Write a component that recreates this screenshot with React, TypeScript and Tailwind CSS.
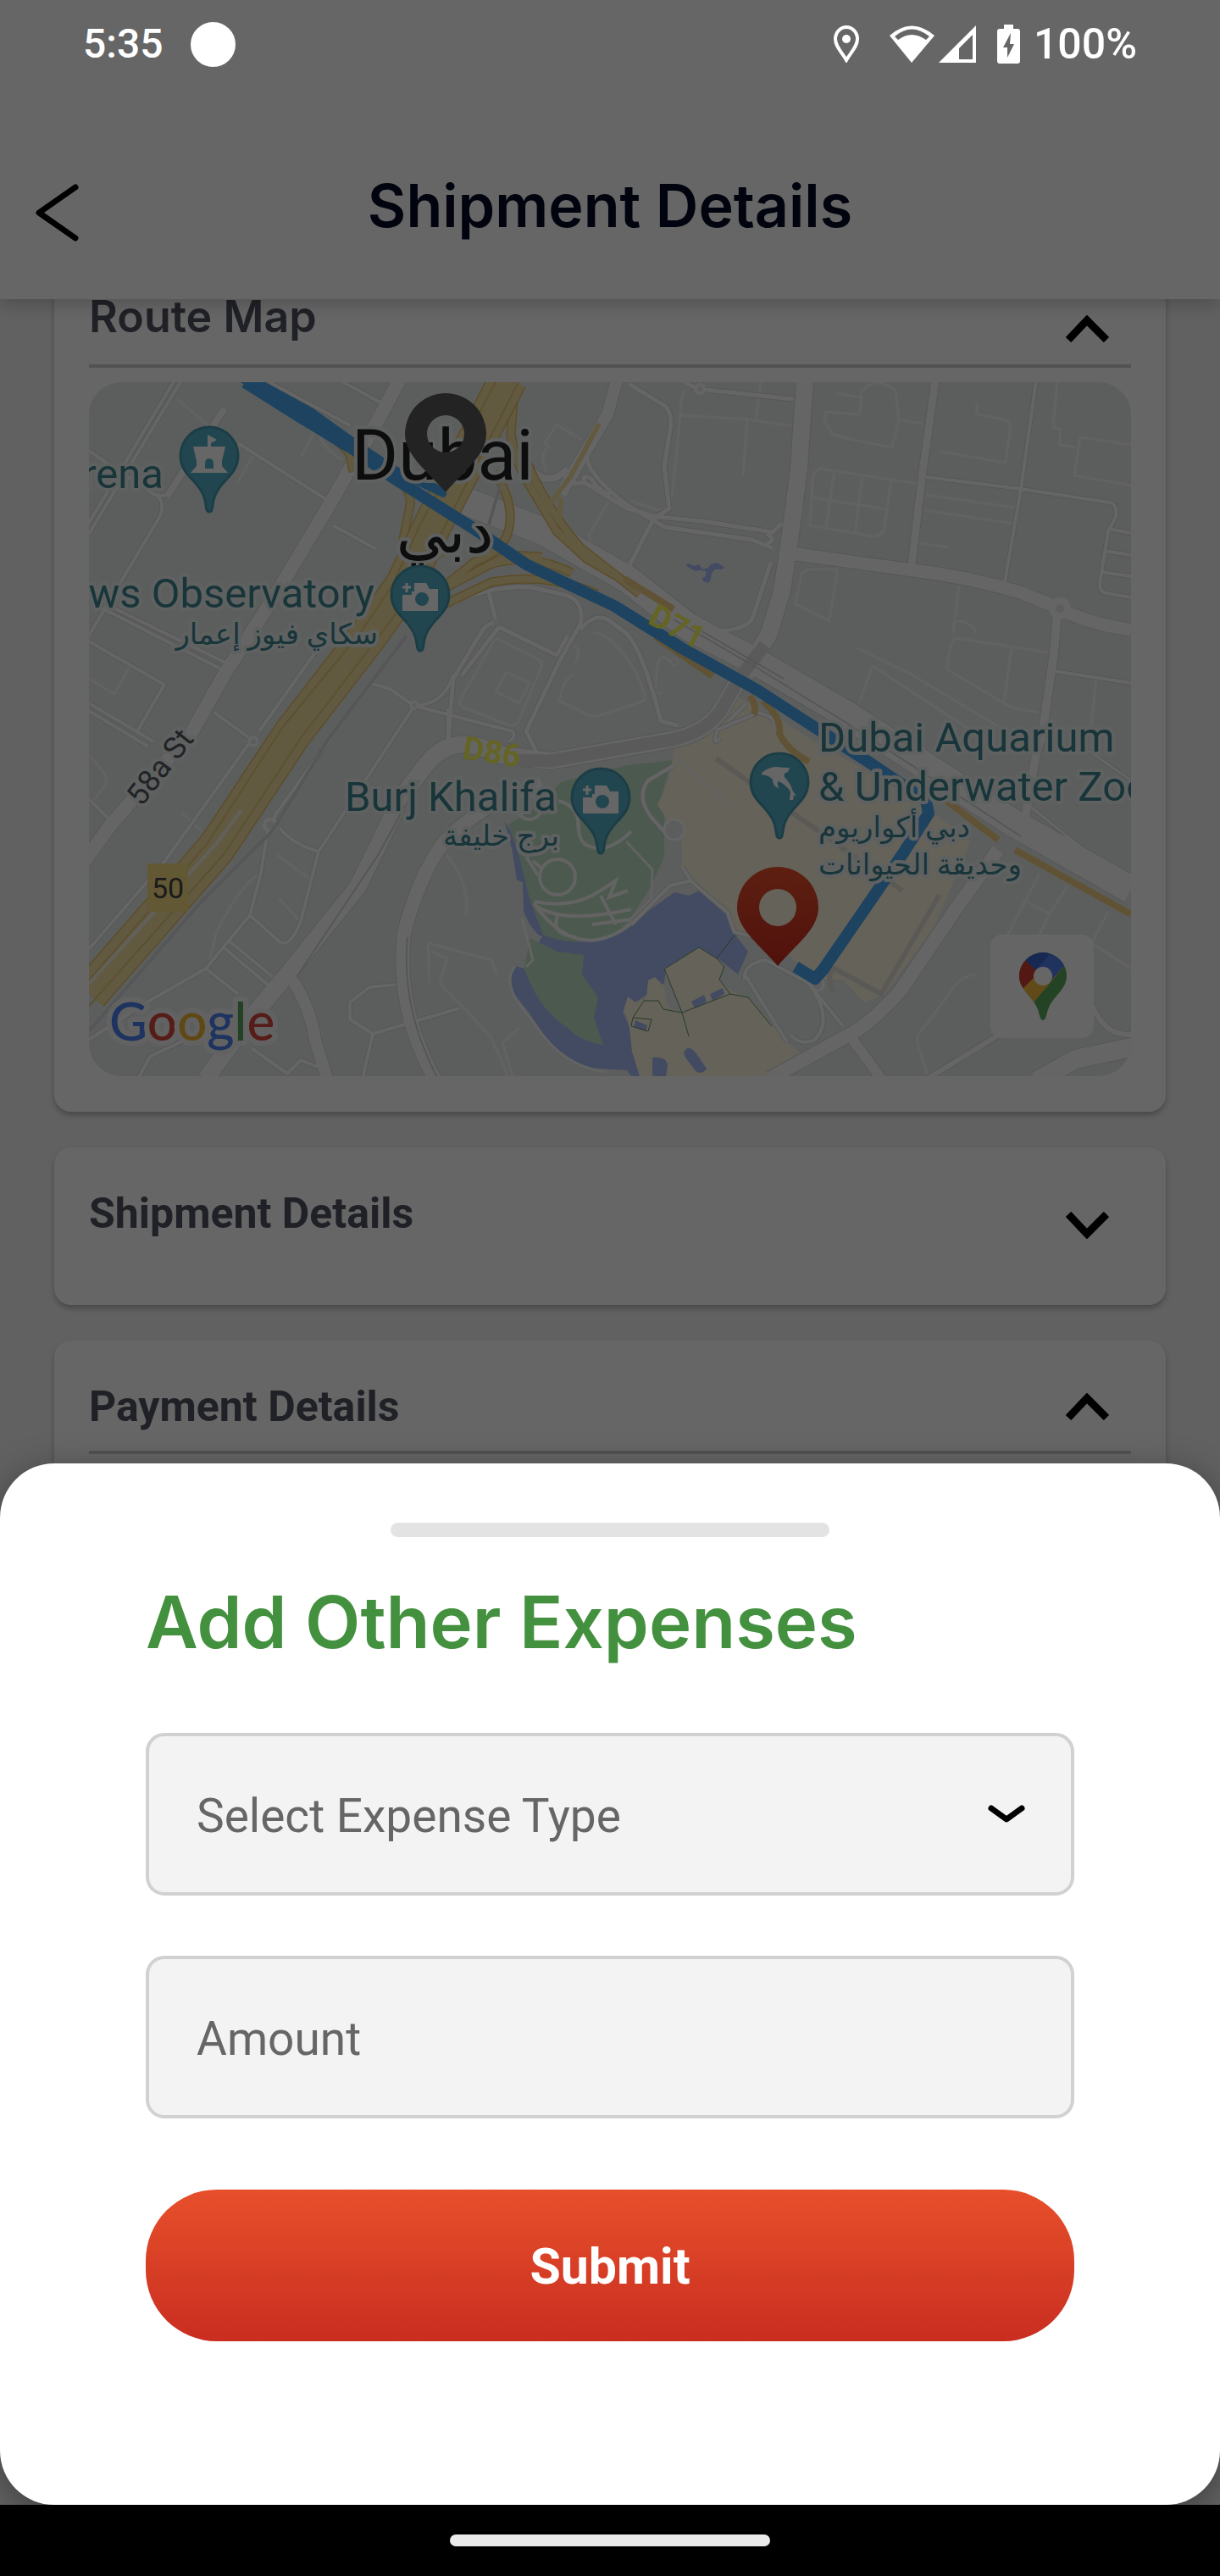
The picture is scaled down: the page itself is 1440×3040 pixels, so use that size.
import { useState } from "react";
import type { ReactNode } from "react";

type Road = { d: string; w: number };

const parks = [
  "M635 452 L557 472 L536 496 L495 522 L508 560 L520 609 L536 652 Q565 664 594 659 L625 649 Q660 610 679 559 L679 509 Q672 480 691 446 Z",
  "M520 656 L553 672 L584 676 L582 699 L601 726 L596 750 L607 782 Q580 778 565 762 Q530 740 514 692 Z",
];

const water = [
  "M503 689 Q496 700 499 719 L520 745 L536 769 Q560 804 599 810 L635 812 L640 819 L650 819 L644 776 L630 742 L679 709 L681 692 L720 667 L741 679 L766 699 L778 672 L765 655 L754 626 L722 599 L708 606 L691 602 L625 649 L594 659 L536 652 L514 692 Z",
  "M491 519 L500 555 L505 588 L512 590 L513 625 Q524 650 534 654 L566 640 L530 610 L527 590 L518 560 Z",
  "M704 216 l4 -2 6 3 6 -2 4 6 7 -2 3 -4 7 -2 9 5 -2 3 -9 0 -4 4 -1 8 -3 4 -6 -2 -1 -4 4 -2 0 -6 -8 -1 -4 1 -6 -3 z",
];

const sands = [
  "M700 419 L766 372 L812 395 L857 425 L977 492 L1040 542 L998 642 L940 722 L915 732 L890 705 L857 704 L803 656 L762 649 L754 622 L724 596 L700 572 L700 542 L671 499 L684 470 L690 436 Z",
  "M679 692 L720 667 L749 686 L744 705 L758 719 L778 726 L824 779 L841 792 L803 819 L650 819 L641 790 L637 752 L631 742 L636 725 L645 732 L658 728 L660 706 L668 702 L678 712 L684 738 L700 744 Z",
];

const ponds = [
  "M711 731 l15 -8 3 8 -14 8 z",
  "M733 722 l15 -7 2 7 -14 8 z",
  "M645 753 l14 6 -2 7 -14 -5 z",
  "M706 786 Q700 790 704 797 L716 813 Q724 818 729 810 L716 791 Q711 785 706 786 Z",
  "M665 797 Q683 795 683 808 L681 819 L665 819 Z",
];

const minorRoads = [
  "M979 120 L863 102 Q855 104 854 118 L851 169 L925 182 Q936 182 939 172 L947 115",
  "M880 104 L870 172 M913 109 L904 179 M853 136 L942 150",
  "M988 133 L1093 148 M986 151 L1091 167 M979 190 L1015 195",
  "M698 39 L778 44 L832 52 M777 44 L772 110 M793 0 L787 46 M703 9 Q698 20 698 39 L689 126 Q686 152 672 151 L640 140",
  "M1133 319 L1023 302 Q1016 304 1013 339 L1089 384 L1122 390 M1089 312 L1080 377",
  "M905 313 L969 344 L1073 406 M1027 239 L1020 296 M1024 282 Q1040 282 1048 296",
  "M884 216 L874 282 L834 262 L841 226 Q845 218 884 222",
  "M911 70 L878 62 L868 45 L870 35 L910 38 L912 10 Q930 -8 952 10 L956 45 L948 77 L911 70 Z M954 44 L984 49 M882 13 L912 18",
  "M1048 25 L1048 38 L1083 45 L1088 50 L1082 95 L1005 82",
  "M1143 0 L1138 53 L1146 56 L1146 74 L1165 77 M1230 74 L1170 65 L1163 110 L1230 122",
  "M480 302 L532 328 Q536 331 534 336 L508 398 Q505 406 496 405 L441 383 Q436 381 438 375 Z M493 342 L520 355 L508 379 L480 365 Z",
  "M595 296 Q602 294 615 304 Q645 330 656 370 Q658 376 650 378 L600 394 L592 394 L555 376 Q560 350 572 345 M571 310 Q582 315 574 332",
  "M400 662 L475 682 L482 700 M400 662 L402 709 M414 709 L423 680 L404 672 M414 709 L474 772 L495 819 M500 819 L488 780 L508 762",
  "M420 556 Q450 590 445 629 M222 558 L262 587 M224 609 L250 637 M203 580 Q180 590 150 650 L139 696",
  "M977 776 L990 819 M977 776 Q980 765 990 756 L1020 715 Q1030 700 1048 699",
  "M1122 580 L1078 664 M1102 611 L1134 627 L1118 660 M1203 625 L1178 672 M1186 664 L1230 692 M1155 594 L1134 627",
  "M0 350 L30 368 L49 334 M250 88 L270 52 Q272 77 300 92 M104 20 L145 54 M175 120 L196 82",
  "M0 440 Q25 465 20 475 L0 500 M110 508 L133 530 M690 440 L758 500 M634 542 L665 575 L664 610 L640 633",
  "M552 50 L538 72 L545 78 M552 50 L582 68 M540 105 Q532 90 540 78 M614 140 L590 180 L594 195 L622 218",
  "M688 330 Q672 318 671 335 L668 368 L676 366 M909 378 L925 335 L1055 420 M1183 406 L1189 351",
];

const roads: Road[] = [
  { d: "M366 -2 L345 38 L283 146 L217 256 L159 346 L122 412 L26 522 L-10 572", w: 16 },
  { d: "M109 -2 L0 179 M101 -2 L0 166", w: 4 },
  { d: "M160 31 L92 135", w: 8 },
  { d: "M0 81 L76 132 Q94 138 98 126 M80 134 Q90 142 84 158 L0 299", w: 4 },
  { d: "M176 72 L281 139 L283 146 M288 169 L339 197 M213 0 L308 51 M300 0 L344 24", w: 4 },
  { d: "M20 262 L163 332 L160 346 M14 266 L155 338", w: 4 },
  { d: "M0 306 L89 357 L57 412 M0 379 L76 424 M0 388 L70 430", w: 4 },
  { d: "M147 389 L188 419 M267 319 L201 412", w: 4 },
  { d: "M623 -2 L612 38 L586 82 L557 132", w: 14 },
  { d: "M518 98 Q541 128 565 102", w: 8 },
  { d: "M561 125 L570 119 L586 119 L635 149 L671 159 L724 164 L807 177 L818 166 M586 119 Q580 108 592 113 Q600 126 615 134", w: 5 },
  { d: "M625 139 L679 171 L783 186 L807 196 M800 178 Q812 188 800 190", w: 5 },
  { d: "M637 2 L680 28 Q687 34 687 50 L679 99 L685 149 L666 162 L633 226 L640 238 L740 294 Q780 292 784 276 L805 212 M588 90 Q590 110 635 145", w: 5 },
  { d: "M700 -2 L718 8 M727 9 L832 20", w: 5 },
  { d: "M433 136 L536 176 L635 232 L708 289 L791 332 L894 392 L977 446 L1089 519 L1230 599", w: 32 },
  { d: "M845 -2 L838 102 L828 179 L818 246 L803 296 L775 345", w: 20 },
  { d: "M828 202 L973 222 Q1040 230 1102 249 L1143 266 Q1180 286 1230 292", w: 15 },
  { d: "M999 -2 L984 106 L971 216", w: 9 },
  { d: "M1118 -2 L1100 126 L1081 236", w: 4 },
  { d: "M988 112 L1100 126 L1205 142 Q1214 144 1212 159 L1203 176 L1193 238 Q1193 248 1201 249 L1230 254 M1203 173 L1230 178 M1198 199 L1230 204 M1195 224 L1230 229", w: 4 },
  { d: "M1143 270 L1139 320 L1125 416 L1118 439 L1104 519", w: 10 },
  { d: "M1139 341 L1230 355", w: 4 },
  { d: "M1230 470 L1180 435 M1110 500 L1185 560", w: 3 },
  { d: "M770 346 L745 389 Q725 415 687 422 L545 447 L482 439 Q430 412 400 449 Q375 480 366 496 L317 596 L234 699 L184 759 L138 822", w: 20 },
  { d: "M430 262 Q470 240 522 242 L565 252 Q585 260 580 286 L557 326 L516 412 L530 440", w: 5 },
  { d: "M472 248 L480 280 M484 289 L552 322 L565 300 M478 284 Q468 285 460 300 L430 350 L424 420 M484 289 L440 346", w: 5 },
  { d: "M580 292 Q598 270 615 282 L635 297 Q655 320 675 400 L695 405", w: 5 },
  { d: "M335 356 L355 362 L384 382 L500 412 Q505 420 495 424 M384 382 Q420 380 430 345 M424 385 L424 425", w: 4 },
  { d: "M284 422 L221 509 L211 529 L203 579 L190 629 L138 692 L68 732 L0 776", w: 4 },
  { d: "M225 526 Q240 545 271 554 L384 382 M271 554 L250 636 Q236 672 222 658 L190 629", w: 4 },
  { d: "M165 659 L217 702 M160 668 L212 712 M138 692 L176 722", w: 4 },
  { d: "M192 422 L89 566 L0 669 M0 492 L28 520", w: 4 },
  { d: "M534 472 L480 496 Q440 520 420 542 Q390 580 372 650 Q362 740 408 822", w: 16 },
  { d: "M240 705 Q262 740 267 776 L281 822", w: 14 },
  { d: "M362 711 L331 714 L308 732 L308 752 L335 769 L323 822 M335 769 L437 739", w: 4 },
  { d: "M192 786 L234 816 L250 800 L270 808 M143 762 L72 796 L58 822", w: 4 },
  { d: "M1073 552 L1023 622 L957 719 Q920 760 894 772 L803 822", w: 16 },
  { d: "M897 770 L935 822", w: 12 },
  { d: "M1235 784 L1164 799 L1118 825", w: 22 },
  { d: "M990 822 L1081 766 M1180 725 Q1195 772 1230 770", w: 6 },
  { d: "M774 699 L824 779 M774 705 Q772 686 799 682 L849 709 Q880 750 857 776 Q840 784 828 770 M849 709 L890 760", w: 4 },
  { d: "M691 452 L660 470 Q645 490 665 515 L684 536 M700 572 L712 590 L754 626 L762 649 L790 656 M712 588 L686 594 L640 640", w: 4 },
  { d: "M745 420 Q735 432 742 410 L790 390 Q812 395 808 405 M755 400 L775 380", w: 4 },
];

const motorwayRamps = [
  "M502 10 L498 62 Q505 100 522 125 L552 176 L588 209 L628 232",
  "M515 90 Q540 150 580 195 L650 250",
  "M478 106 Q502 140 496 172 Q490 200 455 212 L418 242",
  "M535 206 L495 204 L428 239 L348 290",
  "M600 250 Q540 224 475 236 L420 262",
  "M570 225 Q520 200 470 216",
  "M250 42 Q300 70 308 86 L312 106",
  "M355 110 Q385 124 378 150 L370 190 L376 215",
  "M425 140 Q405 176 418 206",
];

const thinRamps = [
  "M602 49 L568 112 L542 146",
  "M557 136 L555 168",
];

const motorway = "M495 -4 L462 60 L405 170 L372 240 L329 300 L240 415 L151 549 L0 722";

function Roads() {
  return (
    <g fill="none" strokeLinejoin="round" strokeLinecap="butt">
      {minorRoads.map((d) => (
        <path key={d} d={d} stroke="#f2f4f3" strokeWidth={3} />
      ))}
      {roads.map((road) => (
        <path key={road.d} d={road.d} stroke="#d3d7d6" strokeWidth={road.w + 2} />
      ))}
      {roads.map((road) => (
        <path key={road.d} d={road.d} stroke="#fdfdfd" strokeWidth={road.w} />
      ))}
      <path
        d="M798 310 L770 346 L745 389 Q725 415 687 422 L545 447 L505 446"
        stroke="#e1e1e1"
        strokeWidth={15}
      />
      <path
        d="M690 280 L790 338 L894 402 L1100 536 M720 292 L820 350"
        stroke="#d3d7d6"
        strokeWidth={2}
      />
      <path d="M376 655 Q368 740 412 822 M390 470 L340 560 L245 702" stroke="#d3d7d6" strokeWidth={2} />
      <circle cx="1146" cy="267" r="9" stroke="#fdfdfd" strokeWidth={8} fill="#e7ebe9" />
      <circle cx="214" cy="523" r="7" stroke="#fdfdfd" strokeWidth={4} fill="#e7ebe9" />
      <circle cx="721" cy="8" r="5" stroke="#fdfdfd" strokeWidth={4} fill="#e7ebe9" />
      <circle cx="194" cy="424" r="5" stroke="#fdfdfd" strokeWidth={3} fill="#e7ebe9" />
      <circle cx="384" cy="381" r="4" stroke="#fdfdfd" strokeWidth={3} fill="#e7ebe9" />
      <circle cx="691" cy="330" r="4" stroke="#f2f4f3" strokeWidth={2} fill="#e7ebe9" />
      <circle cx="691" cy="528" r="12" stroke="#fdfdfd" strokeWidth={3} fill="#e7ebe9" />
      <circle cx="860" cy="711" r="7" stroke="#fdfdfd" strokeWidth={3} fill="#e7ebe9" />
      {motorwayRamps.map((d) => (
        <path key={d} d={d} stroke="#e3bf68" strokeWidth={11} />
      ))}
      {motorwayRamps.map((d) => (
        <path key={d} d={d} stroke="#f3dfa0" strokeWidth={8} />
      ))}
      {thinRamps.map((d) => (
        <path key={d} d={d} stroke="#f3dfa0" strokeWidth={6} />
      ))}
      <path d={motorway} stroke="#e3bf68" strokeWidth={46} />
      <path d={motorway} stroke="#f3dfa0" strokeWidth={43} />
      <path
        d="M482 -4 L390 170 L358 240 L320 296 L228 408 L140 544 L0 706 M509 -4 L420 170 L388 240 L339 304 L250 420 L160 556 L0 736"
        stroke="#e6c878"
        strokeWidth={2}
      />
      <path d="M0 710 L150 545 L180 505" stroke="#f4f0e2" strokeWidth={4} />
      <path
        d="M486 120 L472 168 M375 299 L284 419 L217 529 L130 616 L0 766"
        stroke="#d6d8dc"
        strokeWidth={4}
      />
      <path
        d="M1000 485 L1073 540 M1093 552 L1230 628 M780 370 Q790 385 784 392 M795 376 Q818 396 815 415 Q825 435 850 448 M632 232 L690 268 M668 300 L736 347"
        stroke="#f0d084"
        strokeWidth={8}
      />
    </g>
  );
}

function Park() {
  return (
    <g fill="none" stroke="#f5f7f5" strokeWidth={4}>
      <circle cx="553" cy="584" r="21" />
      <circle cx="520" cy="502" r="14" />
      <path d="M526 613 Q570 622 604 600 L622 588 L614 608 L636 600 M527 618 Q560 640 640 622 M553 630 Q545 652 575 655 M604 606 L622 640 M594 640 L640 634" />
      <path d="M525 615 Q560 664 600 658 Q640 650 664 610 M524 565 L536 575 M516 560 L530 582" />
      <path d="M554 494 Q580 500 578 530 M640 530 Q610 560 585 545 Q575 535 578 510" />
      <path d="M503 689 Q490 705 505 730 L528 760 Q560 808 610 814 M511 632 L524 682 L516 690" strokeWidth={3} />
    </g>
  );
}

function PlacePin({ x, y, children }: { x: number; y: number; children: ReactNode }) {
  return (
    <g transform={`translate(${x} ${y})`}>
      <path
        d="M0 65 C-5 65 -3 56 -6 48 C-12 28 -34 22 -34 -1 A34 34 0 1 1 34 -1 C34 22 12 28 6 48 C3 56 5 65 0 65 Z"
        fill="#54b0c8"
        stroke="#4799ae"
        strokeWidth={3}
      />
      {children}
    </g>
  );
}

function CameraGlyph() {
  return (
    <>
      <path d="M-21 -1 H-10 V-5 H-7 V-15 H7 L11 -8 H21 V18 H-21 Z" fill="#fff" />
      <circle cx="2" cy="4" r="8" fill="#54b0c8" />
      <path d="M-16 -15 V-4 M-21 -10 H-11" stroke="#fff" strokeWidth={3} />
    </>
  );
}

function RoutePin({ x, y, fill }: { x: number; y: number; fill: string }) {
  return (
    <path
      transform={`translate(${x} ${y})`}
      d="M0 69 C-20 45 -48 26 -48 0 A48 48 0 1 1 48 0 C48 26 20 45 0 69 Z M0 22 A22 22 0 1 0 0 -22 A22 22 0 1 0 0 22 Z"
      fill={fill}
      fillRule="evenodd"
    />
  );
}

function MapsButton() {
  return (
    <g>
      <rect x="1064" y="652" width="122" height="122" rx="14" fill="#fff" fillOpacity={0.85} />
      <clipPath id="maps-pin">
        <path d="M1126 753 C1122 753 1122 744 1119 738 C1113 724 1098 716 1098 701 A28 28 0 1 1 1154 701 C1154 716 1139 724 1133 738 C1130 744 1130 753 1126 753 Z" />
      </clipPath>
      <g clipPath="url(#maps-pin)">
        <rect x="1090" y="665" width="72" height="90" fill="#5ba85c" />
        <path d="M1090 728 L1126 686 L1154 686 L1115 732 L1095 750 Z" fill="#f2b83c" />
        <path d="M1085 665 L1106 683 L1121 697 L1100 718 L1085 735 Z" fill="#cf3c31" />
        <path d="M1106 683 L1095 660 L1140 660 L1134 675 L1119 695 Z" fill="#3a68cf" />
        <path d="M1134 675 L1140 660 L1175 665 L1152 688 L1134 708 L1118 694 Z" fill="#5080ec" />
      </g>
      <circle cx="1126" cy="701" r="11" fill="#fff" />
    </g>
  );
}

function RouteMap() {
  return (
    <svg viewBox="0 0 1230 819" className="mt-[17px] block h-auto w-full rounded-[38px] bg-[#e7ebe9]">
      <defs>
        <linearGradient id="destination" x1="0" y1="0" x2="0" y2="1">
          <stop offset="0" stopColor="#ea4f2b" />
          <stop offset="1" stopColor="#c82c20" />
        </linearGradient>
      </defs>

      {water.map((d) => <path key={d} d={d} fill="#a7bbf5" />)}
      {parks.map((d) => <path key={d} d={d} fill="#bfdec4" />)}
      {sands.map((d) => <path key={d} d={d} fill="#fcf5de" />)}
      {ponds.map((d) => <path key={d} d={d} fill="#a7bbf5" />)}
      <path
        d="M741 680 L764 650 M680 692 L720 667 L741 680 L750 690 L744 705 L757 722 L700 744 L679 692 M757 722 L778 726 L806 760 M642 750 L655 730 L672 730 L678 740 L700 744 L708 772 M642 750 L640 760 L660 766 L664 752 Z"
        fill="none"
        stroke="#5c9464"
        strokeWidth={1}
      />
      <Park />
      <Roads />
      <path
        d="M740 444 L960 600 M1004 605 L935 722 L880 692 Q868 698 880 720"
        fill="none"
        stroke="#e2dfd6"
        strokeWidth={6}
      />

      <g fill="none" stroke="#4da9f0" strokeLinejoin="round">
        <path d="M164 -15 L200 0 L262 34 L318 74 L365 105 L414 126 L418 132 L350 100 L300 76 L250 44 Z" fill="#4da9f0" strokeWidth={8} />
        <path
          d="M184 0 L254 44 L308 76 L358 112 L453 172 L516 215 L620 264 L700 314 L790 364 L870 416 L923 450 L988 494 L991 509 L961 556 L866 694 L857 704 L834 690"
          strokeWidth={14}
        />
      </g>

      {/* place labels */}
      <g
        fontFamily="Roboto, sans-serif"
        fontSize="49"
        fill="#3e8491"
        stroke="#eef3f2"
        strokeWidth={8}
        strokeLinejoin="round"
        paintOrder="stroke"
      >
        <text x="88" y="125" textAnchor="end">rena</text>
        <text x="337" y="266" textAnchor="end">ws Observatory</text>
        <text x="552" y="506" textAnchor="end">Burj Khalifa</text>
        <text x="861" y="436">Dubai Aquarium</text>
        <text x="861" y="494">&amp; Underwater Zoo</text>
        <g fontFamily="'Noto Sans', 'DejaVu Sans', sans-serif" fontSize="34">
          <text x="341" y="309" textAnchor="end">سكاي فيوز إعمار</text>
          <text x="555" y="547" textAnchor="end">برج خليفة</text>
          <text x="861" y="537">دبي أكواريوم</text>
          <text x="861" y="581">وحديقة الحيوانات</text>
        </g>
        <g fill="#222">
          <text x="310" y="115" fontSize="84">Dubai</text>
          <text x="420" y="201" fontSize="74" textAnchor="middle" fontFamily="'Noto Sans', 'DejaVu Sans', sans-serif">دبي</text>
        </g>
        <text transform="translate(62 502) rotate(-52)" fontSize="36" fill="#55595f">58a St</text>
      </g>
      <g fontFamily="Roboto, sans-serif" fontSize="38" fontWeight="700" fill="#faf95a">
        <text transform="translate(658 284) rotate(28)">D71</text>
        <text transform="translate(440 444) rotate(9)">D86</text>
      </g>
      <rect x="69" y="568" width="48" height="57" fill="#f6dd83" />
      <text x="93" y="609" textAnchor="middle" fontFamily="Roboto, sans-serif" fontSize="34" fill="#444">50</text>

      <PlacePin x={142} y={88}>
        <path d="M-2 -26 L9 -20 L2 -16 V-12 H19 L15 5 V11 L22 19 H-22 L-15 11 V5 L-19 -12 H-2 Z" fill="#fff" />
        <path d="M-5 14 V8 Q-5 2 0 2 Q5 2 5 8 V14 Z" fill="#54b0c8" />
      </PlacePin>
      <PlacePin x={391} y={252}><CameraGlyph /></PlacePin>
      <PlacePin x={604} y={491}><CameraGlyph /></PlacePin>
      <PlacePin x={815} y={473}>
        <path d="M-21 -12 Q-14 -18 -5 -19 Q5 -18 12 -18 L10 -13 Q4 -12 6 -7 Q14 2 15 8 L20 16 L17 14 L16 20 L12 20 L13 10 Q6 0 -2 -2 Q-3 4 0 7 Q-8 4 -8 -4 Q-12 -9 -21 -10 Z" fill="#fff" />
      </PlacePin>

      <RoutePin x={421} y={61} fill="#595959" />
      <RoutePin x={813} y={620} fill="url(#destination)" />

      <text
        x="24"
        y="777"
        fontFamily="Lato, sans-serif"
        fontSize="62"
        fontWeight="500"
        stroke="#f4f6f5"
        strokeWidth={12}
        strokeLinejoin="round"
        paintOrder="stroke"
      >
        <tspan fill="#4c80ee">G</tspan>
        <tspan fill="#d8463a">o</tspan>
        <tspan fill="#edb432">o</tspan>
        <tspan fill="#4c80ee">g</tspan>
        <tspan fill="#57a55a">l</tspan>
        <tspan fill="#d8463a">e</tspan>
      </text>
      <MapsButton />
    </svg>
  );
}

type SectionProps = {
  title: string;
  open: boolean;
  onToggle: () => void;
  titleClass?: string;
  rowClass?: string;
  className?: string;
  children?: ReactNode;
};

function Section({ title, open, onToggle, titleClass, rowClass, className, children }: SectionProps) {
  return (
    <section className={`rounded-[20px] bg-white px-[41px] shadow-[0_4px_6px_rgba(0,0,0,0.25)] ${className || ""}`}>
      <button
        type="button"
        aria-expanded={open}
        onClick={onToggle}
        className={`flex w-full justify-between pt-12 pr-[26px] text-left ${rowClass || "items-end pb-[22px]"} ${
          open ? "border-b-4 border-[#cdcdcd]" : ""
        }`}
      >
        <span className={`leading-[60px] text-[#505361] ${titleClass || "text-[50px] font-bold"}`}>{title}</span>
        <svg viewBox="0 0 51 32" className="w-[51px]" fill="none" stroke="#000" strokeWidth={9}>
          <path d={open ? "M3 29 L25 6 L48 29" : "M3 3 L25 26 L48 3"} />
        </svg>
      </button>
      {open && children}
    </section>
  );
}

function StatusBar() {
  return (
    <div className="flex h-[104px] items-center px-[98px] text-[48px] font-medium text-white">
      <span>5:35</span>
      <span className="ml-8 size-[53px] rounded-full bg-white" />
      <svg viewBox="0 0 30 44" className="ml-auto w-[30px]" fill="none" stroke="#fff" strokeWidth={4}>
        <path d="M15 41 C10 32 2 25 2 16 A13 14 0 0 1 28 16 C28 25 20 32 15 41 Z" />
        <circle cx="15" cy="16" r="5" fill="#fff" stroke="none" />
      </svg>
      <svg viewBox="0 0 53 44" className="ml-9 w-[53px]">
        <path d="M0 12 Q26 -11 53 12 L26 44 Z" fill="#fff" />
        <path d="M6 13 Q26 -4 47 13 L43 17 Q26 5 10 17 Z" fill="#666" />
      </svg>
      <svg viewBox="0 0 44 44" className="ml-[5px] w-[44px]">
        <path d="M44 0 V44 H0 Z" fill="#fff" />
        <path d="M40 11 V40 H24 V27 Z" fill="#666" />
      </svg>
      <svg viewBox="0 0 27 46" className="ml-[25px] w-[27px]">
        <path d="M8 0 H19 V5 H24 Q27 5 27 8 V43 Q27 46 24 46 H3 Q0 46 0 43 V8 Q0 5 3 5 H8 Z" fill="#fff" />
        <path d="M16 10 L7 27 H12 V39 L20 23 H15 Z" fill="#666" />
      </svg>
      <span className="ml-4 text-[50px]">100%</span>
    </div>
  );
}

const App = () => {
  const [open, setOpen] = useState({ route: true, shipment: false, payment: true });
  const [expenseType, setExpenseType] = useState("");
  const [amount, setAmount] = useState("");

  return (
    <div className="relative flex min-h-screen flex-col overflow-hidden bg-[#f2f2f2] font-[Roboto,sans-serif]">
      <header className="relative z-10 grid grid-cols-[1fr_auto_1fr] items-center bg-white px-[42px] pt-[133px] shadow-[0_6px_20px_rgba(0,0,0,0.2)]">
        <button type="button" aria-label="Back" className="w-[51px] pt-4">
          <svg viewBox="0 0 51 68" fill="none" stroke="#000" strokeWidth={7} strokeLinecap="round" strokeLinejoin="round">
            <path d="M47 4 L4 34 L47 64" />
          </svg>
        </button>
        <h1 className="py-[70px] font-[Inter,sans-serif] text-[70px] leading-[80px] font-semibold text-[#040a24]">
          Shipment Details
        </h1>
      </header>

      <main className="-mt-[57px] flex flex-1 flex-col gap-[42px] px-16">
        <Section
          title="Route Map"
          titleClass="font-[Inter,sans-serif] text-[52px] font-semibold"
          rowClass="items-end pb-[26px]"
          className="pb-[42px]"
          open={open.route}
          onToggle={() => setOpen({ ...open, route: !open.route })}
        >
          <RouteMap />
        </Section>
        <Section
          title="Shipment Details"
          className="pb-14"
          open={open.shipment}
          onToggle={() => setOpen({ ...open, shipment: !open.shipment })}
        />
        <Section
          title="Payment Details"
          className="flex-1"
          rowClass="items-center pb-[22px]"
          open={open.payment}
          onToggle={() => setOpen({ ...open, payment: !open.payment })}
        />
      </main>

      {/* modal layer */}
      <div className="absolute inset-0 z-20 flex flex-col bg-black/60">
        <StatusBar />
        <div
          role="dialog"
          aria-labelledby="sheet-title"
          className="mt-auto rounded-[64px] bg-white px-[172px] pt-[70px] pb-[193px] shadow-[0_8px_40px_rgba(0,0,0,0.35)]"
        >
          <div className="mx-auto h-[17px] w-[518px] rounded-full bg-[#e3e3e3]" />
          <h2
            id="sheet-title"
            className="mt-[53px] font-[Inter,sans-serif] text-[85px] leading-[96px] font-semibold text-[#43913f]"
          >
            Add Other Expenses
          </h2>
          <form onSubmit={(e) => e.preventDefault()}>
            <div className="relative mt-[82px]">
              <select
                aria-label="Select Expense Type"
                value={expenseType}
                onChange={(e) => setExpenseType(e.target.value)}
                className="block h-48 w-full appearance-none rounded-[22px] border-4 border-[#d1d1d1] bg-[#f3f3f3] px-14 pt-1 text-[55px] text-[#666]"
              >
                <option value="">Select Expense Type</option>
              </select>
              <svg
                viewBox="0 0 44 24"
                className="pointer-events-none absolute top-[84px] right-[58px] w-[44px]"
                fill="none"
                stroke="#000"
                strokeWidth={7}
                strokeLinecap="round"
                strokeLinejoin="round"
              >
                <path d="M4 5 L22 18 L40 5" />
              </svg>
            </div>
            <input
              aria-label="Amount"
              placeholder="Amount"
              inputMode="decimal"
              value={amount}
              onChange={(e) => setAmount(e.target.value)}
              className="mt-[71px] block h-48 w-full rounded-[22px] border-4 border-[#d1d1d1] bg-[#f3f3f3] px-14 pt-1 text-[55px] text-[#666] placeholder:text-[#666]"
            />
            <button
              type="submit"
              className="mt-[84px] block h-[179px] w-full rounded-[84px] bg-linear-to-b from-[#e74f2b] to-[#c92d20] pt-1 text-[59px] font-bold text-white"
            >
              Submit
            </button>
          </form>
        </div>
        <div className="flex h-[84px] items-center justify-center bg-black">
          <div className="h-[14px] w-[378px] rounded-full bg-[#ebebeb]" />
        </div>
      </div>
    </div>
  );
};

export default App;
